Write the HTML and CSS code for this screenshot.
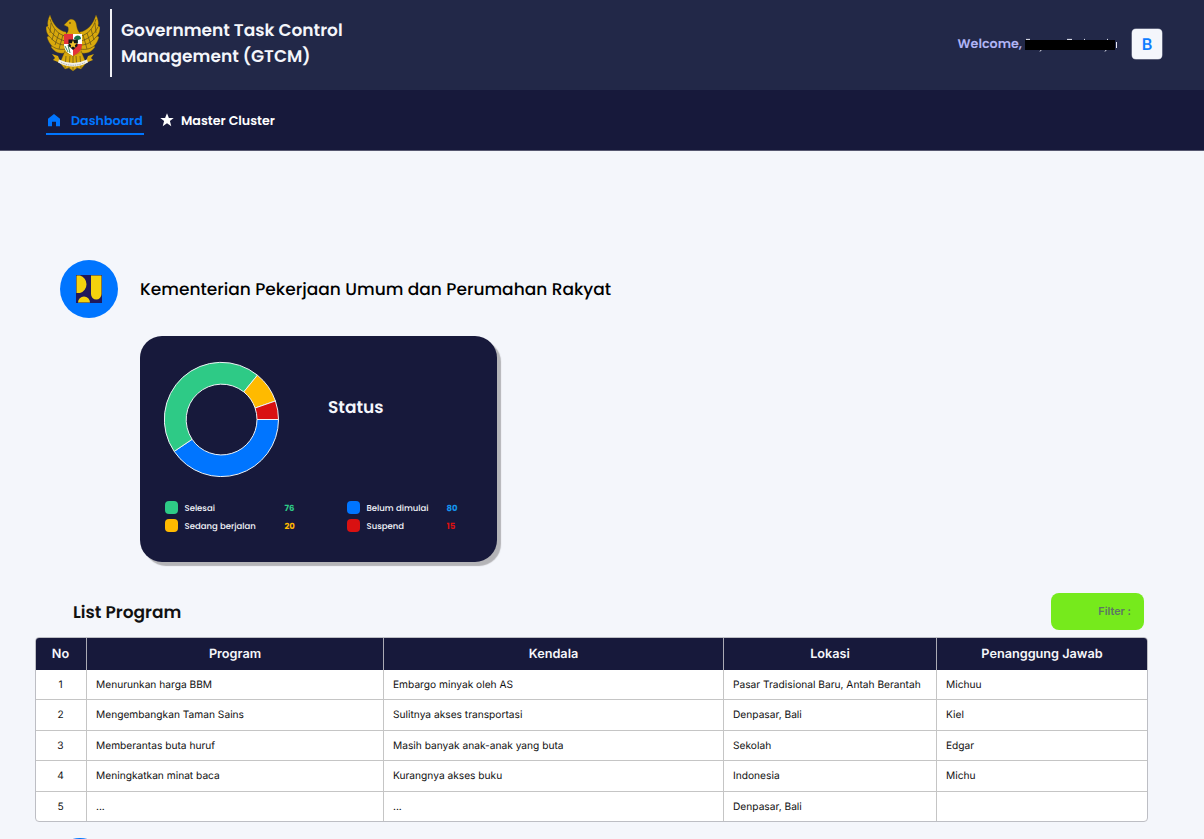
FILE: index.html
```html
<!DOCTYPE html>
<html lang="id">
<head>
<meta charset="utf-8">
<title>Government Task Control Management (GTCM)</title>
<link rel="stylesheet" href="styles.css">
</head>
<body>
<header class="topbar">
  <svg class="emblem" viewBox="0 0 54 58">
    <g fill="#d9a90c" stroke="#6f570b" stroke-width=".35">
      <path d="M20 18C13 17 7 11 4 1C2 5 1 9 2 12L0 13C0 17 1 20 3 22L1 23C2 27 4 30 6 32L5 33C8 37 12 40 18 39L22 33Z"/>
      <path d="M34 18C41 17 47 11 50 1C52 5 53 9 52 12L54 13C54 17 53 20 51 22L53 23C52 27 50 30 48 32L49 33C46 37 42 40 36 39L32 33Z"/>
      <path d="M19 37L35 37L40 49L35 55L31 54L27 57L23 54L19 55L14 49Z"/>
      <path d="M19 21C22 19 23 16 22 13L18 11L22 7C24 4 29 5 30 9C31 13 31 17 35 20L35 38L27 42L19 38Z"/>
    </g>
    <g fill="none" stroke="#554718" stroke-width=".65">
      <path d="M4 5C7 15 12 20 19 22M2 13C6 21 12 25 19 27M3 22C8 28 13 31 19 31M6 32C10 35 14 36 20 35M5 9L4 19M9 15L6 26M13 19L9 31M17 21L13 35"/>
      <path d="M50 5C47 15 42 20 35 22M52 13C48 21 42 25 35 27M51 22C46 28 41 31 35 31M48 32C44 35 40 36 34 35M49 9L50 19M45 15L48 26M41 19L45 31M37 21L41 35"/>
      <path d="M20 42L19 54M24 42L23 54M27 42L27 56M30 42L31 54M34 42L35 54"/>
    </g>
    <path d="M18 20H27V31H18Z" fill="#e33439"/>
    <path d="M27 20H36V31H27Z" fill="#fff"/>
    <path d="M18 30H27V42C21 39 18 36 18 30Z" fill="#fff"/>
    <path d="M36 30H27V42C33 39 36 36 36 30Z" fill="#e33439"/>
    <path d="M28 25C28 21 35 20 35 25L32 26V29H31V26Z" fill="#16744c"/>
    <path d="M19 32L22 38M22 31L24 39" stroke="#3c8a54" fill="none"/>
    <path d="M22.500 25.500H31.500V32L27 36L22.500 32Z" fill="#171719"/>
    <path d="M27 26L28.200 29.200L31 29.300L28.800 31.200L29.600 34L27 32.400L24.400 34L25.200 31.200L23 29.300L25.800 29.200Z" fill="#efc52c"/>
    <path d="M6 40L12 42L14 47Q27 54 40 47L42 42L48 40L45 44L47 46L42 48Q27 58 12 48L7 46L9 44Z" fill="#d9a90c"/>
    <path d="M13 45.500Q27 52.500 41 45.500L42 48.500Q27 56.500 12 48.500Z" fill="#f2f1ea"/>
    <path d="M15 48.500Q27 54 39 48.500" fill="none" stroke="#8b8b87" stroke-width=".8" stroke-dasharray="1 .8"/>
    <path d="M23 9H25" stroke="#443712"/>
  </svg>
  <span class="divider"></span>
  <h1 class="brand">Government Task Control<br>Management (GTCM)</h1>
  <div class="user">
    <span class="welcome">Welcome,</span>
    <svg class="redacted" viewBox="0 0 93 15"><path d="M1 4.400H5M42 4.400H47M59 4.400H60M82 4.400H83M15 16.500L17 14M80 16.500L82 14M91.500 7V13" stroke="#e9eaf4" fill="none"/><path d="M0 5H90V15H0Z"/></svg>
    <span class="avatar">B</span>
  </div>
</header>
<nav class="nav">
  <a class="nav-item active"><svg class="home" viewBox="0 0 12 13"><path d="M0 4.700L6 0L12 4.700V12.300H8V7.800H4V12.300H0Z" fill="currentColor"/></svg><span>Dashboard</span></a>
  <a class="nav-item"><svg class="star" viewBox="0 0 14 14"><path d="M7 .3L8.900 5H13.700L9.900 8.100L11.300 13.200L7 10.200L2.700 13.200L4.100 8.100L.3 5H5.100Z" fill="currentColor"/></svg><span>Master Cluster</span></a>
</nav>
<main class="content">
  <section class="ministry">
    <span class="ministry-logo"><svg viewBox="0 0 26 28"><path d="M0 0H26V28H0Z" fill="#20195b"/><path d="M.5 .5H4A8.500 9 0 0 1 4 18H.5ZM15 .5H25.500V19A5.250 5.500 0 0 1 15 19ZM2 27.500A6 6 0 0 1 14 27.500Z" fill="#f5d20d"/></svg></span>
    <h2 class="ministry-name">Kementerian Pekerjaan Umum dan Perumahan Rakyat</h2>
  </section>
  <section class="status-card">
    <div class="chart-row">
      <svg class="donut" viewBox="-57.500 -58.500 116 116"><g stroke="#eef2f5" stroke-width="1" stroke-linejoin="round">
        <path fill="#0075ff" d="M57 0A57 57 0 0 1 -47.300 31.900L-29.400 19.800A35.500 35.500 0 0 0 35.500 0Z"/>
        <path fill="#2eca86" d="M-47.300 31.900A57 57 0 0 1 35.900 -44.300L22.300 -27.600A35.500 35.500 0 0 0 -29.400 19.800Z"/>
        <path fill="#ffba00" d="M35.900 -44.300A57 57 0 0 1 53.900 -18.500L33.600 -11.500A35.500 35.500 0 0 0 22.300 -27.600Z"/>
        <path fill="#d91111" d="M53.900 -18.500A57 57 0 0 1 57 0H35.500A35.500 35.500 0 0 0 33.600 -11.500Z"/>
      </g></svg>
      <h3 class="status-title">Status</h3>
    </div>
    <div class="legend">
      <i class="swatch green"></i><span>Selesai</span><b class="green-text">76</b>
      <i class="swatch blue"></i><span>Belum dimulai</span><b class="blue-text">80</b>
      <i class="swatch yellow"></i><span>Sedang berjalan</span><b class="yellow-text">20</b>
      <i class="swatch red"></i><span>Suspend</span><b class="red-text">15</b>
    </div>
  </section>
  <div class="list-head"><h2 class="list-title">List Program</h2><button class="filter">Filter :</button></div>
  <div class="table-frame">
    <table class="programs">
      <colgroup><col class="c-no"><col class="c-program"><col class="c-kendala"><col class="c-lokasi"><col></colgroup>
      <thead><tr><th>No</th><th>Program</th><th>Kendala</th><th>Lokasi</th><th>Penanggung Jawab</th></tr></thead>
      <tbody>
        <tr><td>1</td><td>Menurunkan harga BBM</td><td>Embargo minyak oleh AS</td><td>Pasar Tradisional Baru, Antah Berantah</td><td>Michuu</td></tr>
        <tr><td>2</td><td>Mengembangkan Taman Sains</td><td>Sulitnya akses transportasi</td><td>Denpasar, Bali</td><td>Kiel</td></tr>
        <tr><td>3</td><td>Memberantas buta huruf</td><td>Masih banyak anak-anak yang buta</td><td>Sekolah</td><td>Edgar</td></tr>
        <tr><td>4</td><td>Meningkatkan minat baca</td><td>Kurangnya akses buku</td><td>Indonesia</td><td>Michu</td></tr>
        <tr><td>5</td><td>...</td><td>...</td><td>Denpasar, Bali</td><td></td></tr>
      </tbody>
    </table>
  </div>
  <svg class="next-logo" viewBox="0 0 58 1"><circle cx="29" cy="29" r="29" fill="#0075ff"/></svg>
</main>
</body>
</html>
```
FILE: styles.css
```css
* { box-sizing: border-box; }
body { margin: 0; height: 839px; overflow: hidden; background: #f4f6fb; color: #000; font-family: Poppins, Inter, sans-serif; text-rendering: geometricPrecision; }
h1, h2, h3 { margin: 0; font-weight: 500; white-space: nowrap; }
svg { display: block; flex: none; }
.topbar { height: 90px; background: #222848; display: flex; align-items: flex-start; padding: 0 42px 0 46px; }
.emblem { width: 54px; height: 58px; margin-top: 14px; }
.divider { width: 2px; height: 68px; margin: 9px 9px 0 10px; background: #f0f1f6; }
.brand { margin-top: 18px; color: #f4f6fb; font-size: 17px; font-weight: 600; line-height: 25.5px; }
.user { margin-left: auto; padding-top: 29px; display: flex; align-items: center; color: #b0b4f5; }
.welcome { padding-top: 1px; font-size: 12.7px; font-weight: 600; line-height: 29px; }
.redacted { width: 93px; height: 15px; margin: -4px 14px 0 3px; overflow: visible; }
.avatar { width: 30px; height: 30px; border-radius: 4px; background: #f4f6fb; box-shadow: 0 0 0 .5px #999daf; color: #0c7cff; font: 600 16px/30px Inter, sans-serif; text-align: center; }
.nav { height: 61px; background: #17193b; border-bottom: 1px solid #55576f; display: flex; align-items: flex-start; gap: 16px; padding: 15px 46px; }
.nav-item { display: flex; align-items: center; height: 30px; color: #fff; font-size: 12.65px; font-weight: 600; white-space: nowrap; }
.nav-item span { padding-top: 3px; }
.active { width: 98px; color: #0075ff; border-bottom: 2px solid #0075ff; padding: 2px 0 0 2px; }
.home { width: 12px; height: 13px; margin-right: 11px; }
.star { width: 14px; height: 14px; margin-right: 7px; }
.content { padding: 109px 56px 0 35px; }
.ministry { display: flex; align-items: center; gap: 22px; margin-left: 25px; }
.ministry-logo { display: flex; justify-content: center; align-items: center; width: 58px; height: 58px; border-radius: 50%; background: #0075ff; }
.ministry-logo svg { width: 26px; height: 28px; }
.ministry-name { font-size: 17px; }
.status-card { width: 357px; height: 226px; margin: 18px 0 0 105px; border-radius: 22px; padding: 25px 24px; background: #17193b; box-shadow: 4px 4px 1px #b4b4b7; color: #f4f6fb; }
.chart-row { display: flex; }
.donut { width: 116px; height: 116px; }
.status-title { font-size: 17px; font-weight: 600; line-height: 25px; margin: 34px 0 0 48px; }
.legend { display: grid; grid-template-columns: 20px 100px 62px 20px 80px 30px; grid-template-rows: 18px 18px; align-items: center; margin: 21px 0 0 .5px; font-size: 8.5px; }
.legend span { font-weight: 500; }
.legend span, .legend b { padding-top: 2px; }
.swatch { width: 13px; height: 13px; border-radius: 4px; }
.green { background: #2eca86; } .blue { background: #0075ff; } .yellow { background: #ffba00; } .red { background: #d91111; }
.green-text { color: #2eca86; } .blue-text { color: #1495ef; } .yellow-text { color: #ffba00; } .red-text { color: #d91111; }
.list-head { display: flex; justify-content: space-between; align-items: center; height: 37px; margin: 31px 4px 0 38px; }
.list-title { font-size: 17px; font-weight: 600; color: #111; }
.filter { width: 93px; height: 37px; border: 0; border-radius: 8px; background: #76ea1c; color: #5d7565; text-align: right; padding: 0 13px 0 0; font: 600 10.8px Inter, sans-serif; }
.table-frame { margin-top: 7px; height: 185px; border: 1px solid #bdbec4; border-radius: 4px; overflow: hidden; background: #fff; font-family: Inter, sans-serif; }
.programs { width: 100%; table-layout: fixed; border-collapse: separate; border-spacing: 0; }
.c-no { width: 51px; } .c-program { width: 297px; } .c-kendala { width: 340px; } .c-lokasi { width: 213px; }
.programs th { height: 31.5px; padding: 1.5px 0 0; background: #17193b; color: #f5f6fa; font-size: 12.7px; font-weight: 600; border-right: 1px solid #aaaab4; }
.programs td { height: 30.6px; padding: .5px 9px 0; border-right: 1px solid #c5c5c5; border-bottom: 1px solid #c5c5c5; color: #111; font-size: 10.2px; line-height: 14px; white-space: nowrap; }
.programs th:first-child { padding-right: 1px; }
.programs td:first-child { padding-right: 10px; text-align: center; }
.programs th:last-child, .programs td:last-child { border-right: 0; }
.programs tr:last-child td { border-bottom: 0; }
.next-logo { width: 58px; height: 1px; margin: 16px 0 0 16px; }
```
